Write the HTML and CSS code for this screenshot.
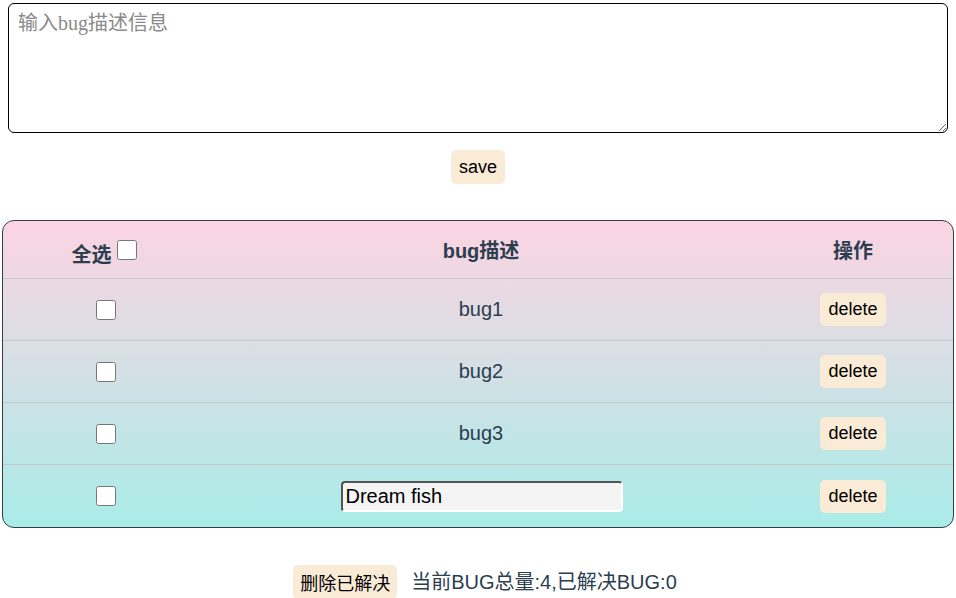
FILE: index.html
```html
<!DOCTYPE html>
<html lang="zh">
<head>
<meta charset="utf-8">
<title>Bug 管理</title>
<link rel="stylesheet" href="styles.css">
</head>
<body>
<div class="app">
  <textarea class="desc-input" placeholder="输入bug描述信息"></textarea>
  <div class="save-row"><button class="btn save-btn">save</button></div>

  <div class="bug-table">
    <div class="row head">
      <div class="cell c1"><span class="all-label">全选</span><input type="checkbox" class="chk head-chk"></div>
      <div class="cell c2">bug描述</div>
      <div class="cell c3">操作</div>
    </div>
    <div class="row">
      <div class="cell c1"><input type="checkbox" class="chk"></div>
      <div class="cell c2">bug1</div>
      <div class="cell c3"><button class="btn del-btn">delete</button></div>
    </div>
    <div class="row">
      <div class="cell c1"><input type="checkbox" class="chk"></div>
      <div class="cell c2">bug2</div>
      <div class="cell c3"><button class="btn del-btn">delete</button></div>
    </div>
    <div class="row">
      <div class="cell c1"><input type="checkbox" class="chk"></div>
      <div class="cell c2">bug3</div>
      <div class="cell c3"><button class="btn del-btn">delete</button></div>
    </div>
    <div class="row last">
      <div class="cell c1"><input type="checkbox" class="chk"></div>
      <div class="cell c2"><input type="text" class="edit-input" value="Dream fish"></div>
      <div class="cell c3"><button class="btn del-btn">delete</button></div>
    </div>
  </div>

  <div class="footer">
    <button class="btn clear-btn">删除已解决</button>
    <span class="stats">当前BUG总量:4,已解决BUG:0</span>
  </div>
</div>
</body>
</html>
```
FILE: styles.css
```css
html, body {
  margin: 0;
  padding: 0;
  background: #fff;
}
body {
  font-family: "Liberation Sans", Arial, "Noto Sans CJK SC", sans-serif;
  color: #2c3e50;
}
.app {
  padding: 3px 2px 0 2px;
  display: flex;
  flex-direction: column;
}
.desc-input {
  display: block;
  box-sizing: border-box;
  margin: 0 6px;
  width: 940px;
  height: 130px;
  border: 1px solid #000;
  border-radius: 6px;
  padding: 7px 9px;
  font-family: "Liberation Serif", "Noto Sans CJK SC", serif;
  font-size: 20px;
  line-height: 24px;
  resize: vertical;
  outline: none;
}
.desc-input::placeholder {
  color: #8a8a8a;
}
.save-row {
  display: flex;
  justify-content: center;
  margin-top: 17px;
}
.btn {
  border: none;
  background: #faebd7;
  border-radius: 5px;
  font-family: "Liberation Sans", Arial, "Noto Sans CJK SC", sans-serif;
  font-size: 18px;
  color: #000;
  cursor: pointer;
}
.save-btn {
  height: 34px;
  padding: 0 8px;
}
.bug-table {
  margin-top: 36px;
  width: 952px;
  box-sizing: border-box;
  border: 1px solid #2c3e50;
  border-radius: 12px;
  overflow: hidden;
  background: linear-gradient(to bottom, #fcd4e2 0%, #a9ece8 100%);
}
.row {
  display: grid;
  grid-template-columns: 206px 544px 1fr;
  height: 62px;
  border-bottom: 1px solid #c8c8c8;
  box-sizing: border-box;
}
.row.head {
  height: 58px;
  font-weight: bold;
}
.row.last {
  border-bottom: none;
  height: 62px;
}
.cell {
  display: flex;
  align-items: center;
  justify-content: center;
  font-size: 20px;
}
.head .c1 {
  padding-right: 4px;
}
.all-label {
  margin-top: 8px;
}
.chk {
  width: 20px;
  height: 20px;
  margin: 0;
}
.head-chk {
  margin: 0 0 0 5px;
}
.del-btn {
  height: 33px;
  padding: 0 8px;
}
.edit-input {
  box-sizing: border-box;
  width: 282px;
  height: 31px;
  border: 2px inset #a8a8a8;
  border-right-color: #fff;
  border-bottom-color: #fff;
  border-radius: 4px;
  background: #f4f4f4;
  font-family: "Liberation Sans", Arial, sans-serif;
  font-size: 20px;
  padding: 0 3px;
  color: #000;
  margin-left: 1px;
}
.footer {
  margin-top: 37px;
  display: flex;
  justify-content: center;
  align-items: center;
  gap: 14px;
  padding-left: 14px;
}
.clear-btn {
  height: 34px;
  padding: 0 7px;
}
.stats {
  font-size: 20px;
  color: #2c3e50;
  padding-bottom: 3px;
}
```
